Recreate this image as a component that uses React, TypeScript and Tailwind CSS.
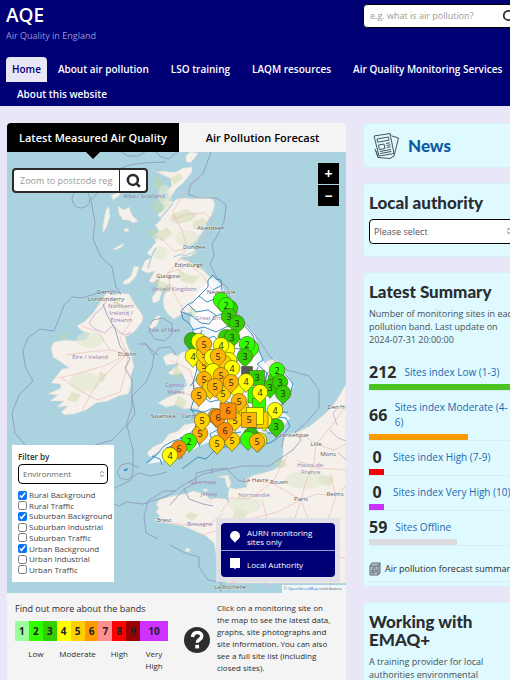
import { useState } from 'react'
import { Search, ChevronsUpDown } from 'lucide-react'

type Marker = { x: number; y: number; band?: number; color: string; square?: boolean; size?: number }

const GREEN = '#31ff00'
const DARK_GREEN = '#31cf00'
const FOREST = '#2bb80c'
const YELLOW = '#ffff00'
const GOLD = '#ffcf00'
const AMBER = '#ffb30a'
const ORANGE = '#ff8c0a'

// Painted in order, later markers sit on top
const markers: Marker[] = [
  { x: 221, y: 301, color: GREEN },
  { x: 230, y: 309, color: DARK_GREEN },
  { x: 226, y: 306, band: 2, color: GREEN },
  { x: 229, y: 317, band: 3, color: DARK_GREEN },
  { x: 237, y: 324, band: 3, color: DARK_GREEN },
  { x: 226, y: 338, color: DARK_GREEN },
  { x: 232, y: 338, band: 3, color: DARK_GREEN },
  { x: 251, y: 349, color: GREEN },
  { x: 247, y: 345, band: 2, color: GREEN },
  { x: 245, y: 357, band: 3, color: DARK_GREEN },
  { x: 192, y: 341, color: FOREST },
  { x: 199, y: 342, color: YELLOW },
  { x: 227, y: 350, color: YELLOW },
  { x: 221, y: 346, band: 4, color: YELLOW },
  { x: 193, y: 357, band: 4, color: YELLOW },
  { x: 204, y: 366, band: 5, color: GOLD },
  { x: 204, y: 355, band: 5, color: GOLD },
  { x: 204, y: 345, band: 5, color: AMBER },
  { x: 229, y: 361, color: YELLOW },
  { x: 224, y: 364, color: GOLD },
  { x: 212, y: 358, color: YELLOW },
  { x: 218, y: 357, band: 5, color: AMBER },
  { x: 232, y: 369, band: 4, color: YELLOW },
  { x: 213, y: 372, color: YELLOW },
  { x: 221, y: 376, band: 5, color: AMBER },
  { x: 204, y: 380, band: 5, color: AMBER },
  { x: 210, y: 389, color: GOLD },
  { x: 223, y: 394, band: 5, color: GOLD },
  { x: 237, y: 389, color: YELLOW },
  { x: 231, y: 383, band: 5, color: AMBER },
  { x: 215, y: 387, band: 5, color: AMBER },
  { x: 199, y: 396, band: 5, color: AMBER },
  { x: 247, y: 372, color: '#555555', square: true, size: 11 },
  { x: 276, y: 379, color: DARK_GREEN },
  { x: 277, y: 371, band: 2, color: GREEN },
  { x: 270, y: 388, band: 3, color: DARK_GREEN },
  { x: 280, y: 383, band: 3, color: DARK_GREEN },
  { x: 283, y: 394, band: 3, color: DARK_GREEN },
  { x: 256, y: 395, color: GREEN, square: true, size: 16 },
  { x: 259, y: 405, color: GREEN, square: true, size: 13 },
  { x: 257, y: 378, band: 3, color: DARK_GREEN, square: true, size: 15 },
  { x: 246, y: 382, band: 4, color: YELLOW },
  { x: 260, y: 393, band: 4, color: YELLOW },
  { x: 241, y: 409, color: GOLD },
  { x: 239, y: 402, band: 5, color: AMBER },
  { x: 275, y: 411, band: 4, color: YELLOW },
  { x: 276, y: 427, band: 3, color: DARK_GREEN },
  { x: 264, y: 421, color: YELLOW },
  { x: 260, y: 420, color: GOLD, square: true, size: 16 },
  { x: 255, y: 416, color: YELLOW, square: true, size: 17 },
  { x: 216, y: 417, color: ORANGE },
  { x: 218, y: 418, band: 6, color: ORANGE },
  { x: 235, y: 421, band: 5, color: GOLD },
  { x: 249, y: 420, band: 5, color: AMBER, square: true, size: 15 },
  { x: 228, y: 411, band: 6, color: ORANGE, square: true, size: 16 },
  { x: 200, y: 434, band: 5, color: AMBER },
  { x: 202, y: 421, band: 5, color: GOLD },
  { x: 217, y: 444, band: 5, color: GOLD },
  { x: 232, y: 441, band: 5, color: GOLD },
  { x: 225, y: 431, band: 6, color: ORANGE },
  { x: 251, y: 436, color: FOREST },
  { x: 248, y: 440, color: GREEN },
  { x: 259, y: 441, color: YELLOW },
  { x: 257, y: 442, band: 5, color: AMBER },
  { x: 189, y: 442, band: 2, color: GREEN },
  { x: 179, y: 449, band: 6, color: ORANGE },
  { x: 170, y: 456, band: 4, color: YELLOW },
]

const labels = [
  { x: 211, y: 230, text: 'Aberdeen' },
  { x: 194, y: 249, text: 'Dundee' },
  { x: 189, y: 267, text: 'Edinburgh' },
  { x: 168, y: 278, text: 'Glasgow' },
  { x: 106, y: 294, text: 'Derry/' },
  { x: 106, y: 301, text: 'Londonderry' },
  { x: 127, y: 356, text: 'Dublin' },
  { x: 221, y: 294, text: 'Newcastle' },
  { x: 256, y: 482, text: 'Le Havre' },
  { x: 279, y: 484, text: 'Rouen' },
  { x: 301, y: 501, text: 'Paris' },
  { x: 335, y: 496, text: 'Reims' },
  { x: 316, y: 446, text: 'Lille' },
  { x: 328, y: 456, text: 'Mons' },
  { x: 164, y: 522, text: 'Brest' },
  { x: 163, y: 418, text: 'Swansea' },
  { x: 191, y: 418, text: 'Cardiff' },
  { x: 293, y: 437, text: 'Dunkerque' },
  { x: 230, y: 589, text: 'La Rochelle' },
  { x: 336, y: 409, text: 'Den H' },
]

const regions = [
  { x: 174, y: 291, text: 'United Kingdom' },
  { x: 213, y: 320, text: 'Great Britain' },
  { x: 144, y: 198, text: 'Alba / Scotland' },
  { x: 121, y: 308, text: 'Northern' },
  { x: 121, y: 315, text: 'Ireland /' },
  { x: 121, y: 322, text: 'Éireann' },
  { x: 90, y: 359, text: 'Éire / Ireland' },
  { x: 165, y: 332, text: 'Isle of Man' },
  { x: 203, y: 484, text: 'Guernsey' },
  { x: 209, y: 496, text: 'Jersey' },
  { x: 254, y: 497, text: 'Normandie' },
  { x: 200, y: 526, text: 'Bretagne' },
  { x: 311, y: 467, text: 'Hauts-de-' },
  { x: 311, y: 474, text: 'France' },
  { x: 176, y: 387, text: 'Cymru /' },
  { x: 176, y: 394, text: 'Wales' },
]

const bands = [
  { n: 1, cls: 'bg-[#9cff9c]' },
  { n: 2, cls: 'bg-[#31ff00]' },
  { n: 3, cls: 'bg-[#31cf00]' },
  { n: 4, cls: 'bg-[#ffff00]' },
  { n: 5, cls: 'bg-[#ffcf00]' },
  { n: 6, cls: 'bg-[#ff9a00]' },
  { n: 7, cls: 'bg-[#ff9090]' },
  { n: 8, cls: 'bg-[#ff0000]' },
  { n: 9, cls: 'bg-[#990000]' },
  { n: 10, cls: 'bg-[#ce30ff] col-span-2' },
]

const environments = [
  'Rural Background',
  'Rural Traffic',
  'Suburban Background',
  'Suburban Industrial',
  'Suburban Traffic',
  'Urban Background',
  'Urban Industrial',
  'Urban Traffic',
]

const summary = [
  { count: 212, label: 'Sites index Low (1-3)', bar: 'w-full bg-[#4bc422]' },
  { count: 66, label: 'Sites index Moderate (4-6)', bar: 'w-[65%] bg-[#ff9a00]' },
  { count: 0, label: 'Sites index High (7-9)', bar: 'w-[10%] bg-[#f50000]' },
  { count: 0, label: 'Sites index Very High (10)', bar: 'w-[10%] bg-[#c832fa]' },
  { count: 59, label: 'Sites Offline', bar: 'w-[58%] bg-[#dcdce0]' },
]

const navItems = ['About air pollution', 'LSO training', 'LAQM resources', 'Air Quality Monitoring Services', 'About this website']

function Pin({ marker }: { marker: Marker }) {
  const { x, y, band, color, square, size = 16 } = marker
  return (
    <g>
      {square ? (
        <rect x={x - size / 2} y={y - size / 2} width={size} height={size} fill={color} stroke="#55601a" strokeWidth={0.6} />
      ) : (
        <path
          d={`M${x} ${y + 10.5}C${x - 2} ${y + 7} ${x - 7.8} ${y + 4.5} ${x - 7.8} ${y - 0.8}a7.8 7.8 0 0 1 15.6 0C${x + 7.8} ${y + 4.5} ${x + 2} ${y + 7} ${x} ${y + 10.5}z`}
          fill={color}
          stroke="#4c5a18"
          strokeWidth={0.6}
        />
      )}
      {band && (
        <text x={x} y={y + 3} textAnchor="middle" fontSize={9} fill="#222">
          {band}
        </text>
      )}
    </g>
  )
}

function SiteMap() {
  return (
    <svg
      viewBox="7 152 339 441"
      preserveAspectRatio="xMidYMid slice"
      className="block h-[441px] w-full bg-[#aad3df] font-['Open_Sans',sans-serif]"
      role="img"
      aria-label="Map of monitoring sites"
    >
      {/* Land */}
      <g fill="#f5f1ea" stroke="#dcd9cc" strokeWidth={0.5}>
        <path d="M152 170l5 2 6-1 7 1 6 0 7-4 9-1 0 5-4 5-5 6-7 6-4 6-5 6 6 1 4-3 8-1 9 1 9-2 9 1 3 6-3 10-5 8-3 8-6 8-4 4-6 4-6 4 6-3 6 1 2 5-5 3-8 1-3 2 8 2 6 4 9 5 6 6 3 6 4 9 2 10 5 7 8 7 10 8 6 8 2 10 3 7-8 1 7 3 5 6 1 8-6 8-5-2 2 5 8-2 5-7 6-7 7-2 8 6 3 10-3 10-8 8-9 8 9 0 7 4 1 5-6 7-12 6-12 2-12-3-8 2-10 5-8-3-8 2-6 7-6 6-8-1-6 3-8 5-8 2-7 3-7 4-3-4 6-6 9-4 7-9 9-3 6-6 14-3 6-3 8-6-8-2-10-3-10 1-8-4-10 2-8-4 8-5 10-4 8-5 2-8-4-8-10 2-4-2 10-8-1-8 5-5 9-1 8 4 9-3 5-1-5-5 0-8 3-5-6-4-6-6-3-6-2-5-10 1-10 6-6-5-4-6-1-8 2-7 4-9-6 5-4 12-6 2-1-6 5-6 2-12-7 4-3-2 6-10-8 2-6-3 4-9 7-4-5-4 5-6 4-5-3-5 6-6-4-6 6-5-3-6 6-5-1-6 6-6-2-7 5-4-2-8z" />
        <path d="M107 292l6 3 7-2 9 1 5 9 9 13-1 6-8 10-9 5 2 7 4 10 3 12-3 9 0 10-3 9-10 2-10 5-12 2-10 7-12 4-9 1-4-3 7-6-11 1 7-6-14 0 8-6-10-1 13-6-1-4-9-1 5-6 6-8 7-1-8-6-8-5-2-9 3-6 12-2 10 1 9-1 5-6-8-3-5-5 8-5 8-8z" />
        <path d="M217 477l8 1 2 9 9 2 11-2-2-7 9-5 9-2 10-3 7-4 3-10 0-14 3-7 12-3 12-6 10-8 10-9 8-11 8-14v199H227l-3-9-7-14-3-17-8-7-9-4-14-6-11-2-13-2-4-2 5-4-4-4 3-4-3-3 3-5 10-3 8-2 8-1 8-3 12 3 5 5 8-1 8 1 3 4-1-10 3-10-3-8z" />
        <path d="M118 206l6 4 5-3 3 8 6 6-5 2-5-3-5 0-4-6zM106 210l3-4 1 10-3 10-4 7 0-8zM111 196l8-5 3-3-3 8-6 4zM123 282l8-6 3-10 5 1-3 9-6 7-6 2zM113 249l11-6-2 4-7 3zM148 326l5-6 5-5 2 2-3 8-6 4zM186 156l4-4 8 1-4 6-4 4-4-2zM163 357l8-4 8 4-3 7-10 1zM203 489l4 0 1 2-4 0zM207 499l5 0-1 3-4-1zM186 548l4 1-1 3-4-1zM124 229l4-1 1 3-4 1z" />
      </g>
      {/* Authority areas are washed out under the markers */}
      <path
        d="M213 277l9 8 8 20 12 16 12 12 8 26 10 14 14-1 8 14-16 22 12 10-10 12-22 4-32 6-20 3-20 10-26 9-12 2 34-32 22-10-8-24-4-30 4-24-6-22 6-28z"
        fill="#fff"
        opacity={0.8}
      />

      {/* Woodland and high ground */}
      <g fill="#c8d7a6" opacity={0.45}>
        <path d="M154 176l7 3 5 7-6 6-7-5zM170 178l10-5 3 5-9 7zM152 203l12-5 6 7-9 8-8-2zM172 214l15-5 10 6-6 6-13 3-8-3zM149 229l12 2 6-4 6 7-10 7-14-4zM155 278l10 5 8 2-5 8-10-2zM178 269l10 6 12 1-7 8-12-3zM193 222l9-4 6 4-7 7-8 0zM190 307l7 2-2 8-6-3zM176 364l6 9-4 9-6-6zM178 395l9 6-3 7-10-2zM112 300l7 1 2 6-6 0zM62 332l7 2-3 7-7-3zM100 371l7 4-5 8-4-6zM72 392l9 3-5 7-9-2zM189 512l10 3-7 6-7-4zM237 507l12 5-6 9-11-4zM290 517l12 5-8 8-12-5zM273 461l12-2 2 7-9 3zM320 474l14 4-4 9-12-4zM252 540l12 5-7 9-10-5zM291 556l14 5-9 8-12-6z" />
      </g>
      <g fill="#e3ead2" opacity={0.6}>
        <ellipse cx={165} cy={195} rx={7} ry={10} />
        <ellipse cx={187} cy={238} rx={12} ry={8} />
        <ellipse cx={160} cy={253} rx={8} ry={7} />
        <ellipse cx={90} cy={340} rx={14} ry={8} />
        <ellipse cx={85} cy={382} rx={15} ry={10} />
        <ellipse cx={245} cy={505} rx={16} ry={8} />
        <ellipse cx={305} cy={480} rx={20} ry={9} />
        <ellipse cx={240} cy={550} rx={16} ry={15} />
        <ellipse cx={320} cy={540} rx={18} ry={20} />
      </g>

      {/* Lochs */}
      <g fill="none" stroke="#aad3df" strokeWidth={1.3}>
        <path d="M173 203l-8 10-9 10-8 6M143 232l9-5M139 252l10-7 8-9M148 268l4-13 4-7M140 215l9-2M148 192l8 2M143 203l8-4M195 252l-12 4M182 254l-8 3" />
      </g>

      {/* Trunk roads */}
      <g fill="none" stroke="#f0a9a5" strokeWidth={0.6} opacity={0.85}>
        <path d="M168 273l12-4 10-6 5-15 10-11 8-16-8-8-18 1-12 5-2-8 11-18 13-16M168 273l2 14 12 20 8 16M190 265l12 10 12 17 9 18M174 216l8 14 5 18-10 15-9 10-14 10M160 237l14 14 10-2" />
        <path d="M128 354l-18-4-22 2-22 3M128 354l-8-16 12-18-10-14-14-8M128 354l-16 14-14 14-16 28M128 354l-2 18-6 20-22 8M128 354l-24 12-28 8-18 4M110 350l-12-18-16-6M98 400l-16-8-20-14" />
        <path d="M301 500l-15-9-14-8-18-2M301 500l5-18 8-20 2-18-15-10M301 500l16-6 18 2 11-10M301 500l-6 18-14 17-30 24-22 26M301 500l8 22 14 24 10 46M301 500l-24 12-30 8-26 10-24 6M272 483l8-15 8-12M316 444l18 6 12-6M316 444l14-16 16-22M221 512l10-14 18 1 23-16M222 514l-12 10-22 1-26-3M221 530l14 8 22 3 30 10 59 7M231 584l20-8 20 10M282 552l10 20-8 20M262 500l6 22-10 18M330 474l6 22-8 24 12 30M296 460l20 8 30 2" />
        <path d="M160 410l20 4 20 2M170 360l20 10 6 20 2 22M174 390l20 6" />
      </g>
      <g fill="none" stroke="#b9a0c4" strokeWidth={0.7}>
        <path d="M107 299l-4 8-8 7-6 9 6 6 10 4 8-8 6 7 6 3 6-3M330 430l8 8 8 3M338 452l8 8M337 425l-4-12 8-8" />
      </g>

      {/* Territorial waters */}
      <g fill="none" stroke="#8f92bb" strokeWidth={0.8}>
        <path d="M121 168c15-6 30-5 45-6M121 168l-12 9-10 14-8 9 4 22-2 17 8 18 11 10 4 20 5 7-9-4-14 3-16 5-10-1-8 8-6 16-4 10-14-2-12 9-5 12 2 16 8 15-14 14-7 18 3 20 12 14 17 12 22-4 26-9 20-6 14-14 6-20 0-26-7-12 5-9-10-13-5-17-8-14-4-11" />
        <path d="M211 152l-8 22-12 10-3 10 11 4 18 0 9 7-2 17-7 14-5 8 2 11-4 10 9 16 9 7 4 18 12 16 15 18 12 18 16 12 22 6 10 14 0 18-14 16-10 8 6 8-8 10-12 8-12 8-26 0-22 4-18 4-18 10-18 12-24 8-16-2-8 4-9-4 1-12 8-4 12-6 2-10 0-20-6-24 8-12-3-18 14-14 6-14 2-12-8-12-8 0" />
        <circle cx={81} cy={199} r={9} />
        <path d="M121 152l7 4 10 0 7-4M156 152l5 5 8 2 8-7M149 327l4-7 10-2 9 6 0 10-8 7-9-2-6-8zM153 356l6-8 11-1 6 8M144 343l14 12" />
        <path d="M170 505l14-16 12-6 0-10 14-3 16-2 12 12 10 3M184 489l5 10 14 5 10 2M158 539l-12-6-2-16 4-16 16-10 12 0M212 474l0-6M170 545l15 8 14 4 0 10 9 13 13 2 0 10M282 447l2-12-16-2" />
      </g>

      {/* English local authority boundaries */}
      <g fill="none" stroke="#3f90c6" strokeWidth={1}>
        <path d="M213 275l-5 5 0 7-9 9-6 6-6 3-6 6 2 8 6 4 4 6 0 12-4 10 6 6 2 12-4 14 2 13-4 12 6 12-2 9-6 5-6 4-10 3-9 5-7 8-7 6-4 3M213 275l3 4 5 1 1 10 5 9 6 15 10 10 9 10 6 14 5 12-6 4 10 9-3 10-8 2M262 384l10-6 12-6 9 12-4 14-11 10-6 8 14 2 4 8-6 8-14 9-14 2-12-3-10 3-8 2-8 0-6 6-6 6-8-2-8 6-8 6" />
        <path d="M199 296l8 6 10-4 9 4M188 304l8 8 12-2 9 6 12-6M182 312l10 4 9 7 8 1 7-9M192 330l12-3 12 5 14-7 12 3M187 348l11-7 4-11M203 341l11-5 6 7 12-5 14 2M214 352l8 4 12-8 17 3 6-8M196 366l14-5 12 6 13-3 8-10M190 386l8-9 12 3 4-8M196 400l8-3 6 5 12-3 12 6M190 410l14 2 9-4 9 7 14 4M206 424l9-5 12 6 15-2M214 446l-4-12 7-4M228 448l-1-14 14-2M243 441l4-12 13-1M180 437l8 3 8-2 4 9M166 448l9-3 6 6 1 8M152 456l8 3 2 6M258 367l-3 8-10 2M268 372l-4 13 9 6 8-2M268 418l6-5 14-1M270 434l-7-6M222 285l-9 5M206 350l-8 5-8-1" />
      </g>
      <path d="M124 469l4-1-1 3-3 0z" fill="#4b95c4" />
      <path d="M117 472l4-7 8-2 10 5M117 472l3 6 7 2 12-7 12 3 16-4" fill="none" stroke="#8f92bb" strokeWidth={0.8} />

      <g fontSize={6} fill="#9581ad" textAnchor="middle">
        {regions.map((r) => (
          <text key={r.text} x={r.x} y={r.y}>
            {r.text}
          </text>
        ))}
      </g>
      <g fontSize={6} fill="#555" stroke="#fff" strokeWidth={1} strokeOpacity={0.5} paintOrder="stroke" textAnchor="middle">
        {labels.map((l) => (
          <text key={l.text} x={l.x} y={l.y}>
            {l.text}
          </text>
        ))}
      </g>

      {markers.map((m, i) => (
        <Pin key={i} marker={m} />
      ))}
    </svg>
  )
}

function NewsIcon() {
  return (
    <svg viewBox="0 0 28 28" className="h-7 w-7 shrink-0" fill="none" stroke="#46525c" strokeWidth={1} strokeLinejoin="round">
      <path d="M20 4l6.500 2L22 24l-4 2.500-12-1L4 19M3 17l1.500 4L6 25M16 2l1-1 2.500 2.500" />
      <path d="M2 4l16-2.500 4 20L7 24z" fill="#dffaff" />
      <path d="M5 7l11.500-2 .6 3.200-11.500 2zM6.500 13l5.500-1 .9 4.600-5.500 1zM14 11.500l4-.7M14.400 13.500l4-.7M14.800 15.500l4-.7M7.800 19.500l11.200-2M8.200 21.500l11.200-2" />
    </svg>
  )
}

function ForecastIcon() {
  return (
    <svg viewBox="0 0 12 14" className="h-[14px] w-3 shrink-0" fill="none" stroke="#5b666d" strokeWidth={1}>
      <path d="M1 4l2-3h8v10l-2 2H1z" fill="#b9c8cd" />
      <path d="M1 4h8v9M9 4l2-3M3 6h4M3 8h2v3H3zM6 8h2M6 10h2" />
    </svg>
  )
}

function Card({ children, className = '' }: { children: React.ReactNode; className?: string }) {
  return <section className={`rounded border border-[#d9eef8] bg-[#dffaff] px-[5px] ${className}`}>{children}</section>
}

const headingClass = "font-['Lato',sans-serif] text-[17px] font-black text-[#2a2d31]"

export default function App() {
  const [checked, setChecked] = useState<string[]>(['Rural Background', 'Suburban Background', 'Urban Background'])

  const toggle = (name: string) => {
    setChecked(checked.includes(name) ? checked.filter((c) => c !== name) : [...checked, name])
  }

  return (
    <div className="h-screen overflow-hidden bg-[#e9e6f8] font-['Open_Sans',sans-serif] text-[#2b2b2b]">
      <header className="bg-[#000074] text-white">
        <div className="-mr-5 flex items-start justify-between pr-2 pl-[6px]">
          <div className="pt-1">
            <div className="text-[19px] leading-[22px] font-semibold">AQE</div>
            <div className="pt-1 text-[9px] leading-3 text-[#9a9ad0]">Air Quality in England</div>
          </div>
          <form className="mt-1 flex h-6 w-[159px] items-center rounded-sm border border-black bg-white" onSubmit={(e) => e.preventDefault()}>
            <input
              aria-label="Search"
              placeholder="e.g. what is air pollution?"
              className="min-w-0 flex-1 pl-[6px] text-[9px] text-black outline-none placeholder:text-[#999]"
            />
            <button aria-label="Search" className="px-[5px] text-[#2b2b2b]">
              <Search className="h-[14px] w-[14px]" strokeWidth={3} />
            </button>
          </form>
        </div>
        <nav className="-mr-5 flex flex-wrap pt-[15px] pl-[6px] text-[10px] leading-6 font-semibold">
          <a href="#home" className="h-[25px] rounded-t bg-[#e9e6f8] px-[6px] text-[#000074]">
            Home
          </a>
          {navItems.map((item) => (
            <a key={item} href="#" className="px-[11px] whitespace-nowrap">
              {item}
            </a>
          ))}
        </nav>
      </header>

      <div className="-mr-6 grid grid-cols-[339fr_164fr] items-start gap-[17px] px-[7px] pt-[17px]">
        <main className="min-w-0">
          <div className="grid grid-cols-[172fr_167fr] text-[11px] leading-[29px] font-semibold text-black" role="tablist">
            <button role="tab" aria-selected="true" className="relative rounded-tl bg-black whitespace-nowrap text-white">
              Latest Measured Air Quality
              <svg viewBox="0 0 14 7" className="absolute top-full left-1/2 z-10 h-[7px] w-[14px] -translate-x-1/2">
                <path d="M0 0h14L7 7z" />
              </svg>
            </button>
            <button role="tab" aria-selected="false" className="rounded-tr bg-[#f4f4f4] whitespace-nowrap">
              Air Pollution Forecast
            </button>
          </div>

          <div className="relative">
            <SiteMap />

            <form
              className="absolute top-4 left-[5px] flex h-[25px] w-[136px] rounded-sm border-2 border-[#2b2b2b] bg-white"
              onSubmit={(e) => e.preventDefault()}
            >
              <input
                aria-label="Zoom to postcode region"
                placeholder="Zoom to postcode region"
                className="mr-[6px] ml-[6px] min-w-0 flex-1 text-[9px] outline-none placeholder:text-[#999]"
              />
              <button aria-label="Zoom" className="flex w-[27px] items-center justify-center border-l border-[#2b2b2b]">
                <Search className="h-[15px] w-[15px]" strokeWidth={4} />
              </button>
            </form>

            <div className="absolute top-[11px] right-[7px] flex w-[21px] flex-col gap-px text-[14px] leading-[21px] font-bold text-white">
              <button className="bg-black" aria-label="Zoom in">
                +
              </button>
              <button className="bg-black" aria-label="Zoom out">
                −
              </button>
            </div>

            <div className="absolute bottom-[11px] left-[5px] w-[102px] bg-white px-[6px] pt-[5px] pb-[7px] text-[8px] text-[#444]">
              <label htmlFor="filter" className="block leading-[13px] font-semibold text-[#2b2b2b]">
                Filter by
              </label>
              <div className="relative mt-px">
                <select id="filter" className="block h-5 w-full appearance-none rounded-sm border border-black bg-white pl-1 text-[8px] text-[#666]">
                  <option>Environment</option>
                </select>
                <ChevronsUpDown className="pointer-events-none absolute top-[6px] right-[2px] h-2 w-2" />
              </div>
              <div className="mt-[6px] flex h-[85px] flex-col justify-between leading-[10px]">
                {environments.map((name) => (
                  <label key={name} className="flex items-center gap-[2px] whitespace-nowrap">
                    <input type="checkbox" checked={checked.includes(name)} onChange={() => toggle(name)} className="h-[9px] w-[9px] accent-[#0b74f5]" />
                    {name}
                  </label>
                ))}
              </div>
            </div>

            <div className="absolute right-[6px] bottom-[11px] w-[124px] bg-[#e0dfe8]/90 p-[5px]">
              <div className="rounded-sm bg-[#000074] text-[8px] leading-[9px] text-white">
                <div className="flex h-7 items-center gap-[7px] border-b border-[#9a9ad0] pl-[9px]">
                  <svg viewBox="0 0 10 12" className="h-3 w-[10px]" fill="#fff">
                    <path d="M5 12C4 9.500 0 8 0 5a5 5 0 0 1 10 0c0 3-4 4.500-5 7z" />
                  </svg>
                  <span>
                    AURN monitoring
                    <br />
                    sites only
                  </span>
                </div>
                <div className="flex h-[26px] items-center gap-[7px] pl-[9px]">
                  <svg viewBox="0 0 10 12" className="h-3 w-[10px]" fill="#fff">
                    <path d="M0 0h10v10H6l-1 1.500L4 10H0z" />
                  </svg>
                  <span>Local Authority</span>
                </div>
              </div>
            </div>

            <div className="absolute right-0 bottom-0 bg-white/80 pr-1 pl-[2px] text-[4px] leading-2 text-[#555]">
              ©{' '}
              <a href="#" className="text-[#2a80bd]">
                OpenStreetMap
              </a>{' '}
              contributors
            </div>
          </div>

          <div className="flex min-h-[90px] justify-between bg-[#f4f4f4] pt-[9px] pr-2 pl-2 text-[8px] leading-3">
            <div className="w-[153px]">
              <p className="text-[9px] leading-[14px]">Find out more about the bands</p>
              <div className="mt-[5px] grid grid-cols-11 text-center text-[10px] leading-5 font-bold text-[#222]">
                {bands.map((b) => (
                  <span key={b.n} className={b.cls}>
                    {b.n}
                  </span>
                ))}
              </div>
              <div className="mt-[7px] grid grid-cols-[3fr_3fr_3fr_2fr] text-center">
                <span>Low</span>
                <span>Moderate</span>
                <span>High</span>
                <span>
                  Very
                  <br />
                  High
                </span>
              </div>
            </div>
            <div className="flex w-[154px] gap-[7px]">
              <svg viewBox="0 0 26 26" className="mt-[25px] h-[26px] w-[26px] shrink-0">
                <circle cx={13} cy={13} r={13} fill="#2d2d2d" />
                <path d="M8.500 10c.3-3 2.200-4.500 4.900-4.500 2.600 0 4.400 1.500 4.400 3.800 0 3.200-4.600 3.200-4.600 6.400" fill="none" stroke="#fff" strokeWidth={3.400} />
                <rect x={11.300} y={17.800} width={3.800} height={3.600} fill="#fff" />
              </svg>
              <p className="w-[116px]">
                Click on a monitoring site on the map to see the latest data, graphs, site photographs and site information. You can also see a full site list
                (including closed sites).
              </p>
            </div>
          </div>
        </main>

        <aside className="flex min-w-0 flex-col gap-[15px]">
          <Card className="flex h-[45px] items-center gap-[8px] pl-2">
            <NewsIcon />
            <h2 className="font-['Lato',sans-serif] text-[17px] leading-5 font-black text-[#0b5aa3]">
              <a href="#">News</a>
            </h2>
          </Card>

          <Card className="pt-[9px] pb-3">
            <h2 className={`${headingClass} leading-5`}>
              <label htmlFor="authority">Local authority</label>
            </h2>
            <div className="relative mt-[6px]">
              <select id="authority" className="block h-[25px] w-full appearance-none rounded-sm border border-black bg-white pl-1 text-[9px] text-[#555]">
                <option>Please select</option>
              </select>
              <ChevronsUpDown className="pointer-events-none absolute top-2 right-2 h-2 w-2" />
            </div>
          </Card>

          <Card className="pt-[9px] pb-1">
            <h2 className={`${headingClass} leading-5`}>Latest Summary</h2>
            <p className="mt-[5px] text-[9px] leading-[13px] text-[#444f58]">Number of monitoring sites in each pollution band. Last update on 2024-07-31 20:00:00</p>
            <ul className="mt-[10px]">
              {summary.map((row) => (
                <li key={row.label} className="border-b border-[#d5eef5] pt-[9px]">
                  <div className="flex items-center gap-[8px] pb-1 text-[10px] leading-[15px]">
                    <span className="min-w-4 text-center text-[16px] font-bold">{row.count}</span>
                    <a href="#" className="pr-2 text-[#1b68b0]">
                      {row.label}
                    </a>
                  </div>
                  <div className={`h-[6px] ${row.bar}`} />
                </li>
              ))}
            </ul>
            <a href="#" className="mt-3 flex items-center gap-[4px] border-b border-[#d5eef5] pt-1 pb-[5px] text-[9px] leading-[14px] whitespace-nowrap">
              <ForecastIcon />
              Air pollution forecast summary
            </a>
          </Card>

          <Card className="pt-[10px] pb-2">
            <h2 className={`${headingClass} leading-[18px]`}>
              Working with
              <br />
              EMAQ+
            </h2>
            <p className="mt-[6px] text-[9px] leading-[13px] text-[#444f58]">A training provider for local authorities environmental professionals</p>
          </Card>
        </aside>
      </div>
    </div>
  )
}
